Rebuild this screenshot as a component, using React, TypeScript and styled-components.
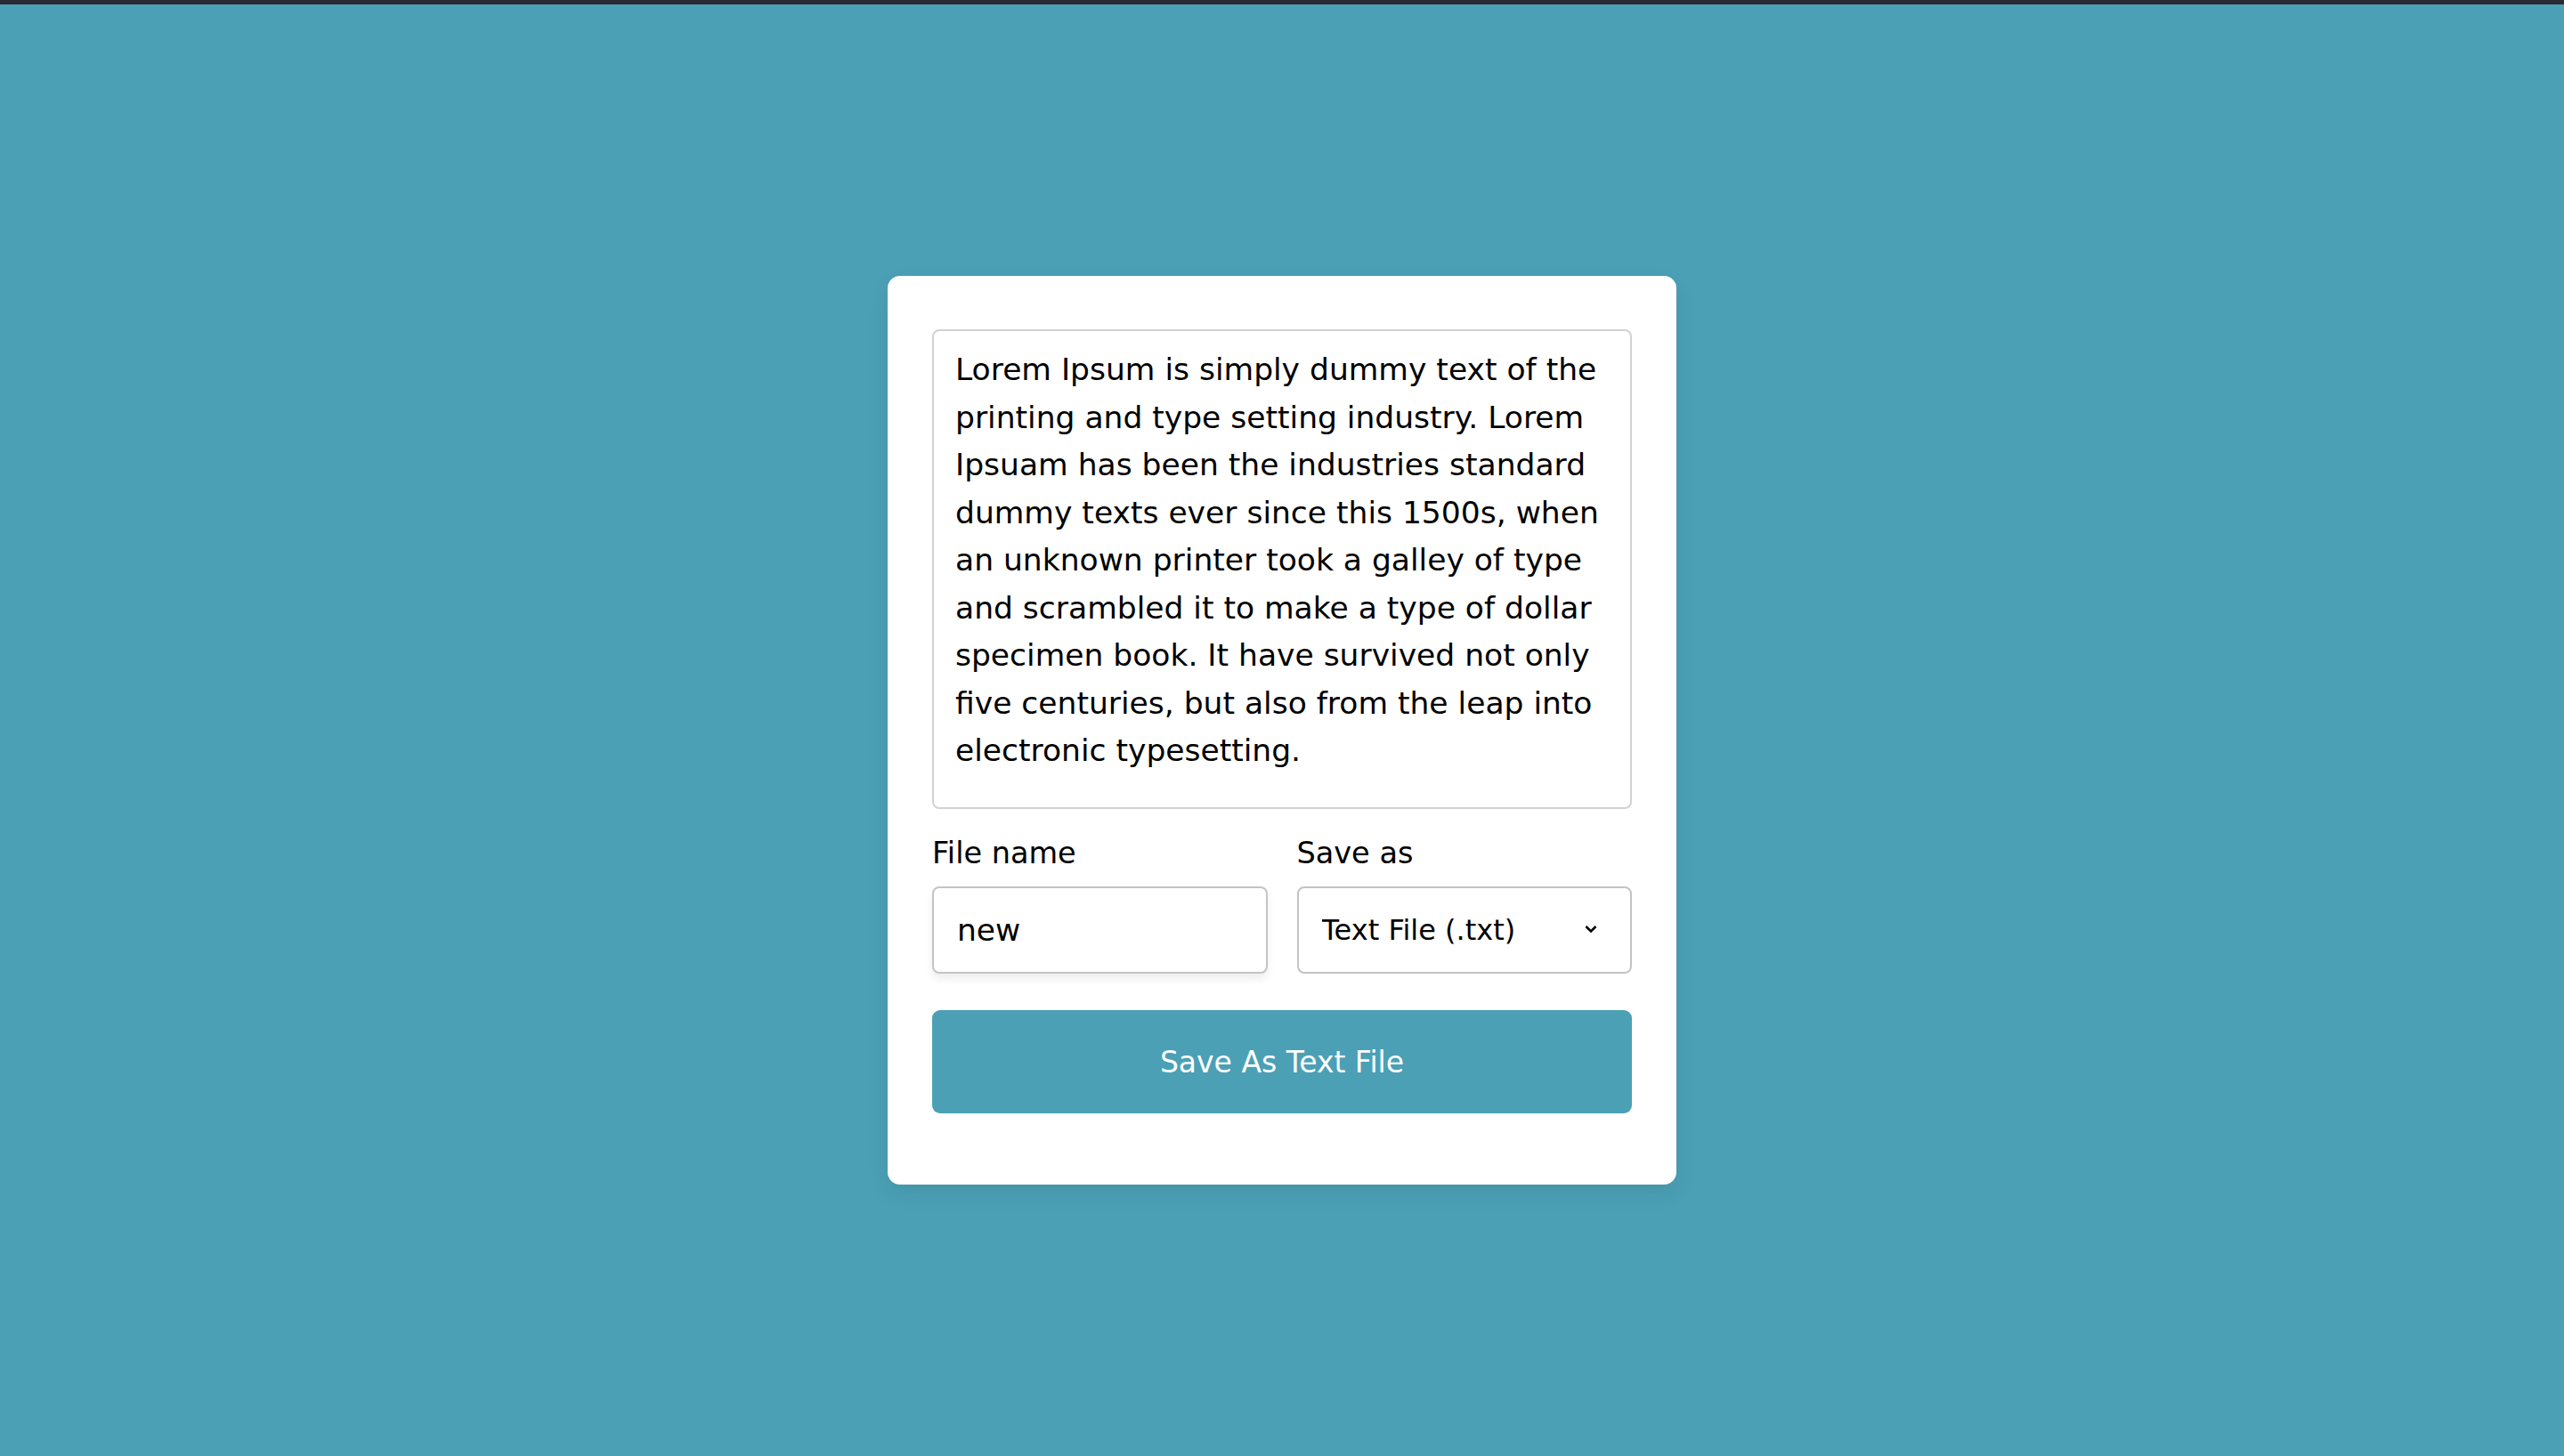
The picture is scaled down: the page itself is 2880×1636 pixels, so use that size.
import styled, { createGlobalStyle } from "styled-components"

const GlobalStyle = createGlobalStyle`
    html, body {
        margin: 0;
        padding: 0;
        height: 100%;
    }
    body {
        background: #4ba0b6;
        font-family: "DejaVu Sans", "Liberation Sans", sans-serif;
        color: #000;
    }
    #root {
        min-height: 100%;
    }
`

const Page = styled.div`
    min-height: 1636px;
    box-sizing: border-box;
    border-top: 5px solid #2b2a33;
    display: flex;
    align-items: center;
    justify-content: center;
`

const Card = styled.div`
    width: 886px;
    box-sizing: border-box;
    padding: 60px 50px 80px;
    background: #fff;
    border-radius: 14px;
    box-shadow: 0 10px 24px rgba(0, 0, 0, 0.08);
    display: flex;
    flex-direction: column;
`

const TextArea = styled.textarea`
    display: block;
    width: 100%;
    height: 539px;
    box-sizing: border-box;
    margin: 0 0 23px;
    padding: 17px 24px;
    border: 2px solid #d2d2d2;
    border-radius: 8px;
    resize: none;
    outline: none;
    font-family: "DejaVu Sans", sans-serif;
    font-size: 34.5px;
    line-height: 53.5px;
    color: #000;
    overflow: hidden;
`

const Row = styled.div`
    display: grid;
    grid-template-columns: minmax(0, 1fr) minmax(0, 1fr);
    column-gap: 33px;
`

const Field = styled.div`
    display: flex;
    flex-direction: column;
    min-width: 0;
`

const Label = styled.label`
    font-size: 33.5px;
    line-height: 54px;
    margin-bottom: 10px;
`

const Input = styled.input<{ $raised?: boolean }>`
    width: 100%;
    height: 98px;
    box-sizing: border-box;
    padding: 0 26px;
    border: 2px solid #c4c4c4;
    border-radius: 8px;
    outline: none;
    font-family: "DejaVu Sans", sans-serif;
    font-size: 34.5px;
    color: #000;
    background: #fff;
    box-shadow: ${p => (p.$raised ? "0 6px 10px rgba(0, 0, 0, 0.07)" : "none")};
`

const SelectWrap = styled.div`
    position: relative;
`

const Select = styled.select`
    width: 100%;
    height: 98px;
    box-sizing: border-box;
    padding: 0 26px;
    border: 2px solid #c4c4c4;
    border-radius: 8px;
    outline: none;
    appearance: none;
    background: #fff;
    font-family: "DejaVu Sans", sans-serif;
    font-size: 32px;
    color: #000;
`

const Chevron = styled.svg`
    position: absolute;
    right: 39px;
    top: 43px;
    pointer-events: none;
`

const Button = styled.button`
    margin-top: 41px;
    height: 116px;
    border: none;
    border-radius: 9px;
    background: #4ba0b6;
    color: #fff;
    font-family: "DejaVu Sans", sans-serif;
    font-size: 33px;
    cursor: pointer;
`

const loremText =
    "Lorem Ipsum is simply dummy text of the printing and type setting industry. Lorem Ipsuam has been the industries standard dummy texts ever since this 1500s, when an unknown printer took a galley of type and scrambled it to make a type of dollar specimen book. It have survived not only five centuries, but also from the leap into electronic typesetting."

function App() {
    return (
        <>
            <GlobalStyle />
            <Page>
                <Card>
                    <TextArea defaultValue={loremText} spellCheck={false} />
                    <Row>
                        <Field>
                            <Label htmlFor="file-name">File name</Label>
                            <Input id="file-name" $raised defaultValue="new" />
                        </Field>
                        <Field>
                            <Label htmlFor="save-as">Save as</Label>
                            <SelectWrap>
                                <Select id="save-as" defaultValue="txt">
                                    <option value="txt">Text File (.txt)</option>
                                    <option value="js">JavaScript File (.js)</option>
                                    <option value="html">HTML File (.html)</option>
                                </Select>
                                <Chevron width="14" height="10" viewBox="0 0 14 10">
                                    <path d="M1.5 2 L7 7.5 L12.5 2" fill="none" stroke="#000" strokeWidth="2.6" />
                                </Chevron>
                            </SelectWrap>
                        </Field>
                    </Row>
                    <Button>Save As Text File</Button>
                </Card>
            </Page>
        </>
    )
}

export default App
